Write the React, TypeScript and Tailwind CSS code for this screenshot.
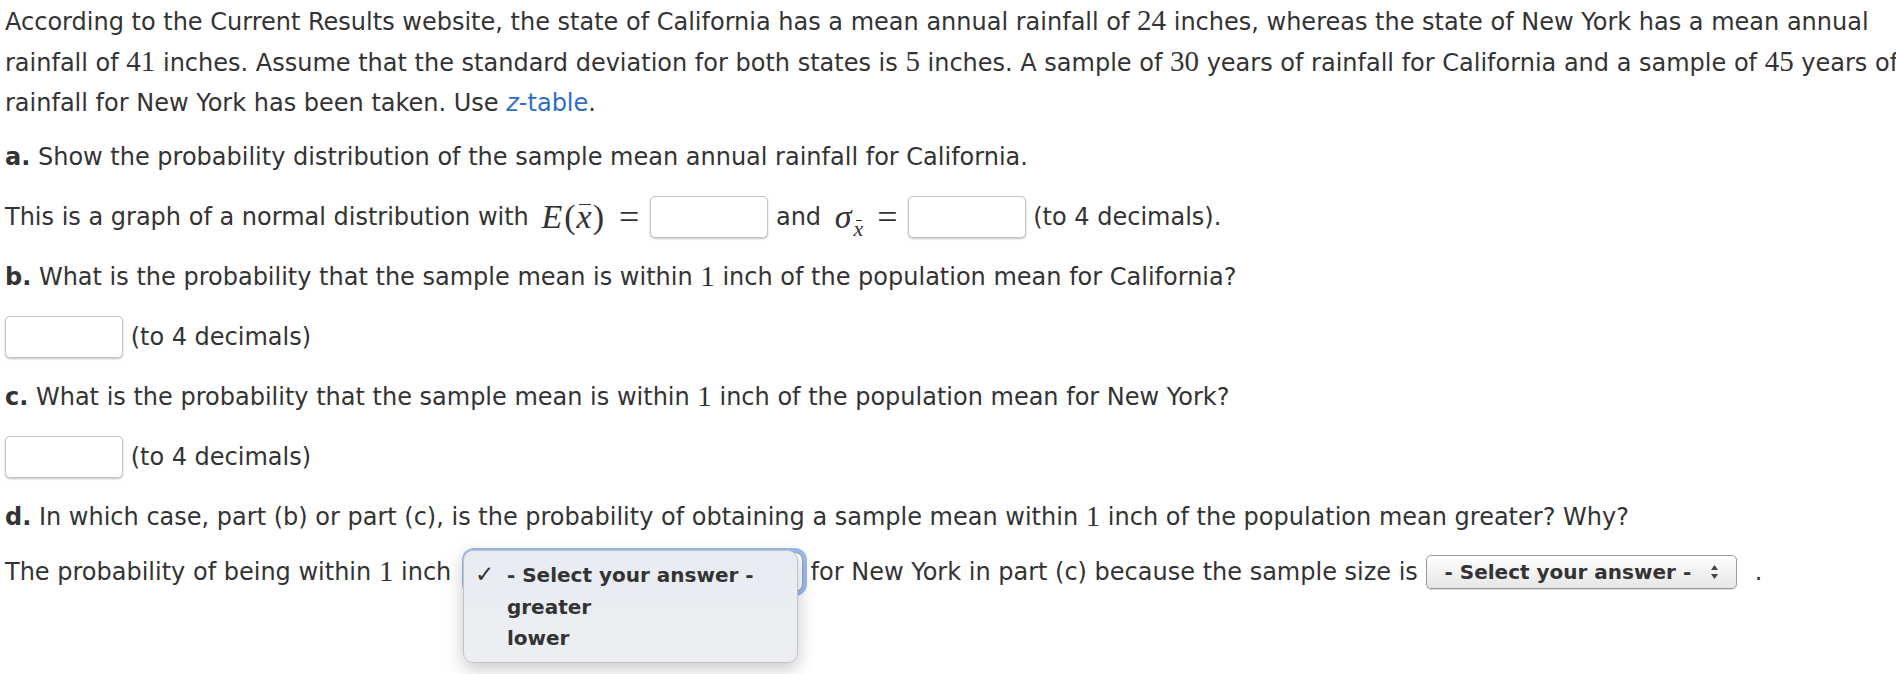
import React from "react";

const M = ({ children }: { children: React.ReactNode }) => (
  <span className="font-['Liberation_Serif',serif] text-[29px] leading-none">{children}</span>
);

const Input = () => (
  <span className="inline-block w-[118px] h-[42px] rounded-[5px] border border-[#c4c4c4] bg-white shadow-[0_1px_2px_rgba(0,0,0,0.25)] align-middle" />
);

const XBar = ({ top = "top-[3px]" }: { top?: string }) => (
  <span className="relative inline-block italic">
    <span className={"absolute left-[2px] right-[1px] h-[1.5px] bg-[#333] " + top} />x
  </span>
);

const UpDown = () => (
  <svg width="9" height="16" viewBox="0 0 9 16" className="block">
    <path d="M4.5 1 L8 6 L1 6 Z" fill="#444" />
    <path d="M4.5 15 L8 10 L1 10 Z" fill="#444" />
  </svg>
);

export default function App() {
  return (
    <div className="w-[1896px] h-[674px] overflow-hidden bg-white">
      <div className="w-[1990px] pl-[5px] text-[24px] text-[#333] font-['DejaVu_Sans',Verdana,sans-serif]">
        <div className="pt-[2px] leading-[40.5px] whitespace-pre">
          <div>
            According to the Current Results website, the state of California has a mean annual rainfall of <M>24</M> inches, whereas the state of New York has a mean annual
          </div>
          <div>
            rainfall of <M>41</M> inches. Assume that the standard deviation for both states is <M>5</M> inches. A sample of <M>30</M> years of rainfall for California and a sample of <M>45</M> years of
          </div>
          <div>
            rainfall for New York has been taken. Use <span className="text-[#2f6cc4]"><i>z</i>-table</span>.
          </div>
        </div>

        <div className="mt-[3px] h-[60px] flex items-center whitespace-pre">
          <span className="font-bold">a.</span>
          <span> Show the probability distribution of the sample mean annual rainfall for California.</span>
        </div>

        <div className="h-[60px] flex items-center whitespace-pre">
          <span>This is a graph of a normal distribution with </span>
          <span className="font-['Liberation_Serif',serif] text-[34px] leading-none ml-[5px]">
            <i className="mr-[2px]">E</i>(<span className="mx-[1px]"><XBar top="top-[4px]" /></span>)
          </span>
          <span className="font-['Liberation_Serif',serif] text-[36px] leading-none ml-[15px] mr-[11px]">=</span>
          <Input />
          <span> and </span>
          <span className="font-['Liberation_Serif',serif] text-[34px] leading-none ml-[6px]">
            <i>σ</i>
            <span className="text-[22px] relative top-[8px] ml-[2px]">
              <XBar top="top-[2px]" />
            </span>
          </span>
          <span className="font-['Liberation_Serif',serif] text-[36px] leading-none ml-[14px] mr-[10px]">=</span>
          <Input />
          <span> (to 4 decimals).</span>
        </div>

        <div className="h-[60px] flex items-center whitespace-pre">
          <span className="font-bold">b.</span>
          <span> What is the probability that the sample mean is within </span>
          <M>1</M>
          <span> inch of the population mean for California?</span>
        </div>

        <div className="h-[60px] flex items-center whitespace-pre">
          <Input />
          <span> (to 4 decimals)</span>
        </div>

        <div className="h-[60px] flex items-center whitespace-pre">
          <span className="font-bold">c.</span>
          <span> What is the probability that the sample mean is within </span>
          <M>1</M>
          <span> inch of the population mean for New York?</span>
        </div>

        <div className="h-[60px] flex items-center whitespace-pre">
          <Input />
          <span> (to 4 decimals)</span>
        </div>

        <div className="mt-[5px] h-[50px] flex items-center whitespace-pre">
          <span className="font-bold">d.</span>
          <span> In which case, part (b) or part (c), is the probability of obtaining a sample mean within </span>
          <M>1</M>
          <span> inch of the population mean greater? Why?</span>
        </div>

        <div className="h-[60px] flex items-center whitespace-pre">
          <span>The probability of being within </span>
          <M>1</M>
          <span> inch </span>
          <span className="relative inline-block ml-[7px] w-[337px] h-[40px] rounded-[8px] border border-[#a0a0a0] bg-white shadow-[0_0_0_4px_rgba(110,156,236,0.7)]">
            <div className="absolute left-[-4px] top-[-3px] w-[335px] h-[113px] rounded-[10px] border border-[#c2c3c7] bg-gradient-to-b from-[#e8ecf2] to-[#eceef2] shadow-[0_6px_18px_rgba(0,0,0,0.22)] pt-[8px] text-[20px] font-bold z-10">
              <div className="h-[32px] flex items-center">
                <span className="w-[43px] pl-[11px] font-bold text-[23px] leading-none">✓</span>
                <span>- Select your answer -</span>
              </div>
              <div className="h-[32px] flex items-center pl-[43px]">greater</div>
              <div className="h-[30px] flex items-center pl-[43px]">lower</div>
            </div>
          </span>
          <span> for New York in part (c) because the sample size is </span>
          <span className="inline-flex items-center justify-between w-[311px] h-[34px] rounded-[5px] border border-[#9a9a9a] bg-gradient-to-b from-white to-[#e6e6e6] shadow-[0_1px_1px_rgba(0,0,0,0.15)] pl-[18px] pr-[17px] text-[20px] font-bold">
            <span>- Select your answer -</span>
            <UpDown />
          </span>
          <span className="ml-[3px]">  .</span>
        </div>
      </div>
    </div>
  );
}
